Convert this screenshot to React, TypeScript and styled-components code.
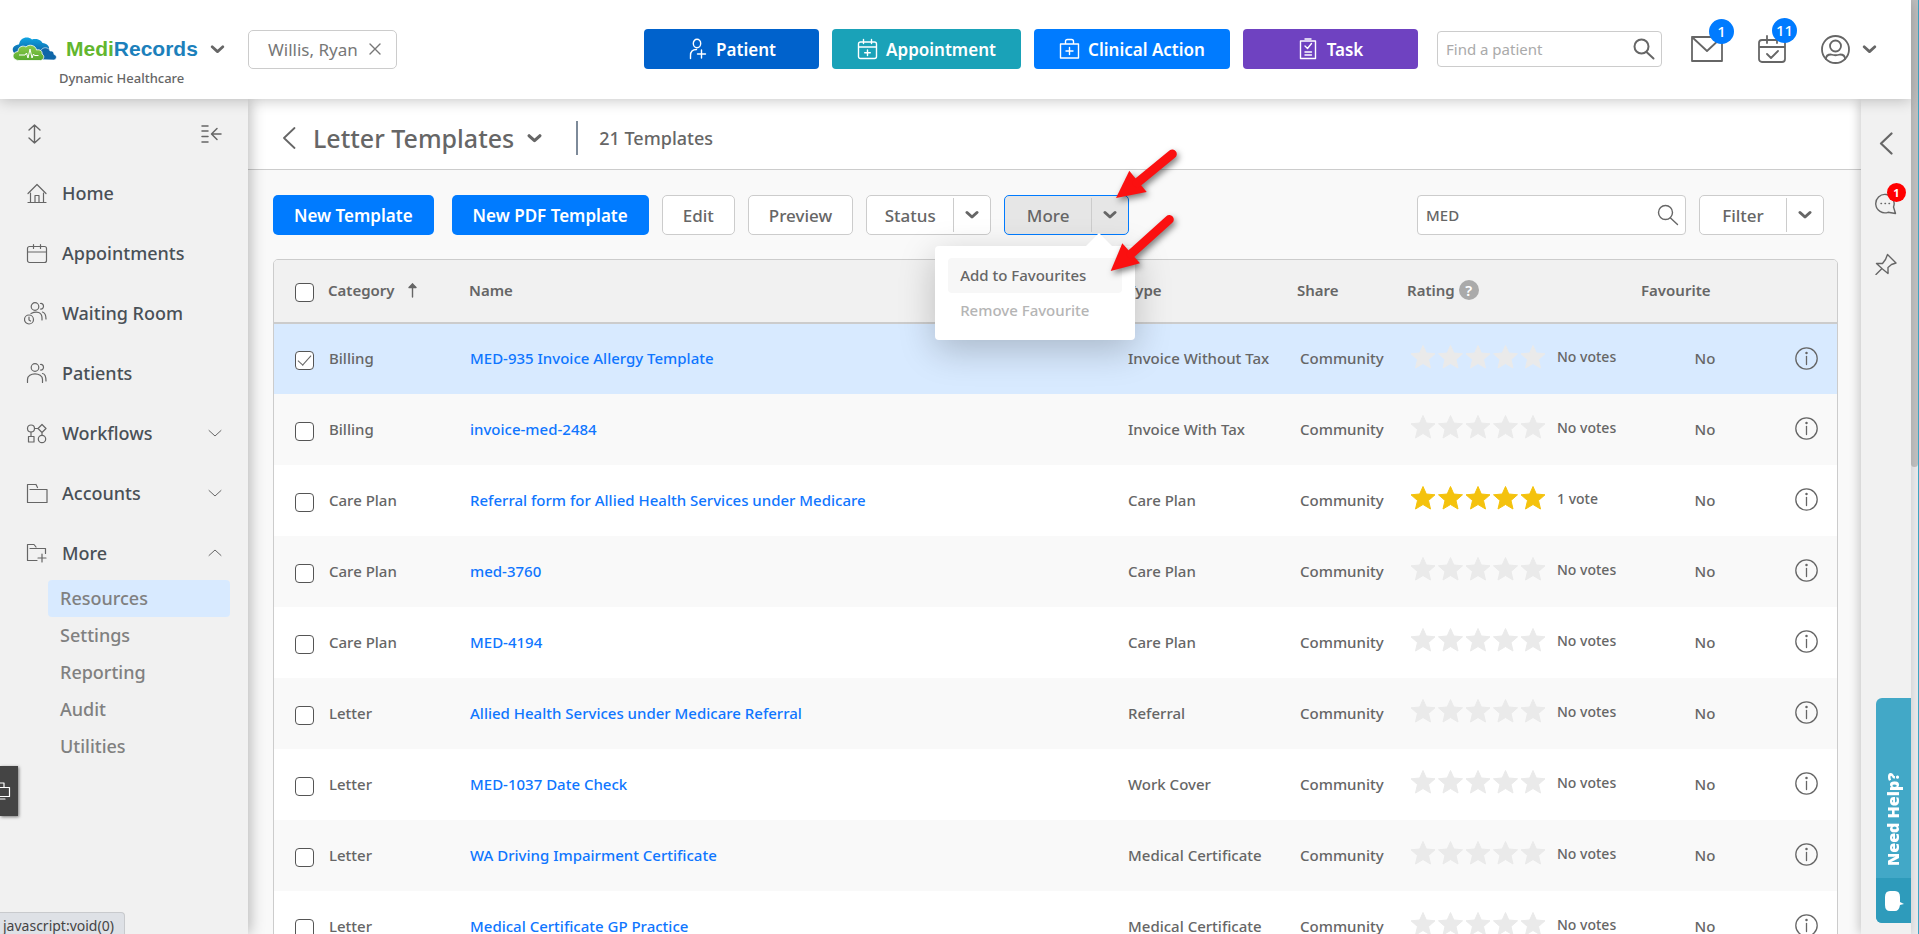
import React from "react";
import styled, { createGlobalStyle, css } from "styled-components";

const ink = "#666666";
const line = "#cccccc";
const blue = "#007bff";
const panel = "#f1f1f1";

const GlobalStyle = createGlobalStyle`
  *, *::before, *::after { box-sizing: border-box; }
  body {
    margin: 0;
    overflow: hidden;
    background: #f9f9f9;
    color: ${ink};
    font-family: "Noto Sans", "Open Sans", sans-serif;
    font-size: 15px;
    font-weight: 500;
  }
  button, input { font: inherit; color: inherit; }
  button { background: none; border: 0; padding: 0; cursor: pointer; }
  a { color: inherit; text-decoration: none; }
  svg { display: block; flex: none; }
`;

/* ---------- shared pieces ---------- */

const Svg = styled.svg<{ $w?: number }>`
  fill: none;
  stroke: currentColor;
  stroke-width: ${(p) => p.$w ?? 1.4};
  stroke-linecap: round;
  stroke-linejoin: round;
`;

type ChevronProps = { size?: number; weight?: number; up?: boolean };
const Chevron = ({ size = 14, weight = 3, up }: ChevronProps) => (
  <Svg width={size} height={size} viewBox="0 0 14 14" $w={weight}>
    <path d={up ? "M1 9.500 7 4l6 5.500" : weight < 2 ? "M1 4.500 7 10l6-5.500" : "M2 4.500 7 9l5-4.500"} />
  </Svg>
);

const SearchIcon = ({ weight = 1.4 }: { weight?: number }) => (
  <Svg width="22" height="22" viewBox="0 0 22 22" $w={weight}>
    <circle cx="8.500" cy="8.500" r="7" />
    <path d="M13.500 14 20.500 20.500" />
  </Svg>
);

/* ---------- window frame ---------- */

const Frame = styled.div`
  display: flex;
  height: 100vh;
  overflow: hidden;
`;

const Page = styled.div`
  display: flex;
  flex-direction: column;
  flex: 1;
  min-width: 0;
`;

const ScrollTrack = styled.div`
  width: 8px;
  background: #e9eaec;
  border-right: 1px solid #3fa6c5;
`;

const ScrollThumb = styled.div`
  height: 50%;
  background: #c0c0c0;
  border-radius: 0 0 4px 4px;
`;

/* ---------- header ---------- */

const Header = styled.header`
  position: relative;
  z-index: 3;
  display: flex;
  align-items: center;
  flex: none;
  height: 99px;
  padding: 0 34px 1px 0;
  background: #fff;
  box-shadow: 0 1px 14px rgba(0, 0, 0, 0.24);
`;

const Brand = styled.div`
  align-self: flex-start;
  width: 248px;
  padding: 34px 0 0 12px;
`;

const BrandRow = styled.div`
  display: flex;
  align-items: center;
  height: 30px;
`;

const BrandName = styled.span`
  margin: 0 12px 0 9px;
  font: bold 21px/30px "Liberation Sans", Arial, sans-serif;
  color: #1c80bb;
  b { color: #62b62f; }
`;

const Practice = styled.div`
  padding-left: 47px;
  font-size: 13px;
  line-height: 28px;
`;

const Chip = styled.div`
  display: flex;
  align-items: center;
  gap: 11px;
  height: 39px;
  padding: 0 15px 0 19px;
  border: 1px solid ${line};
  border-radius: 5px;
  color: #777;
  font-size: 17px;
  font-weight: 400;
`;

const Spacer = styled.div`
  flex: 1;
`;

const ActionGroup = styled.div`
  display: flex;
  gap: 13px;
  margin-right: 19px;
`;

const ActionButton = styled.button<{ $bg: string; $width: number }>`
  display: flex;
  align-items: center;
  justify-content: center;
  gap: 8px;
  width: ${(p) => p.$width}px;
  height: 40px;
  border-radius: 4px;
  background: ${(p) => p.$bg};
  color: #fff;
  font-size: 17px;
  font-weight: 600;
`;

const SearchBox = styled.label<{ $width: number; $height: number }>`
  display: flex;
  align-items: center;
  width: ${(p) => p.$width}px;
  height: ${(p) => p.$height}px;
  padding: 0 6px 0 8px;
  border: 1px solid ${line};
  border-radius: 4px;
  background: #fff;
  input {
    flex: 1;
    min-width: 0;
    padding: 0;
    border: 0;
    outline: 0;
    background: none;
    font-size: 15px;
  }
  input::placeholder { color: #aaa; font-weight: 400; }
`;

const HeaderIcons = styled.div`
  display: flex;
  align-items: center;
  gap: 35px;
  margin-left: 29px;
`;

const IconButton = styled.button`
  position: relative;
  display: flex;
  align-items: center;
  gap: 12px;
`;

const Badge = styled.span<{ $small?: boolean }>`
  position: absolute;
  top: ${(p) => (p.$small ? -10 : -17)}px;
  right: ${(p) => (p.$small ? -9 : -11)}px;
  width: ${(p) => (p.$small ? 19 : 25)}px;
  height: ${(p) => (p.$small ? 19 : 25)}px;
  border-radius: 50%;
  background: ${(p) => (p.$small ? "#ff0000" : blue)};
  color: #fff;
  font-size: ${(p) => (p.$small ? 11 : 15)}px;
  font-weight: ${(p) => (p.$small ? 700 : 500)};
  line-height: ${(p) => (p.$small ? 19 : 25)}px;
  text-align: center;
`;

/* ---------- sidebar ---------- */

const Body = styled.div`
  display: flex;
  flex: 1;
  min-height: 0;
`;

const Sidebar = styled.nav`
  position: relative;
  z-index: 1;
  flex: none;
  width: 248px;
  background: ${panel};
  box-shadow: 2px 0 14px rgba(0, 0, 0, 0.28);
`;

const SidebarTools = styled.div`
  display: flex;
  justify-content: space-between;
  align-items: center;
  height: 64px;
  padding: 6px 26px 0 27px;
`;

const NavItem = styled.a`
  display: flex;
  align-items: center;
  height: 60px;
  padding: 0 26px 0 24px;
  color: #495057;
  font-size: 18px;
  svg { color: ${ink}; }
  span { flex: 1; padding-left: 13px; }
`;

const SubNav = styled.div`
  display: flex;
  flex-direction: column;
  margin: -3px 18px 0 48px;
`;

const SubItem = styled.a<{ $active?: boolean }>`
  height: 37px;
  padding-left: 12px;
  border-radius: 4px;
  background: ${(p) => (p.$active ? "#d8eaff" : "none")};
  color: #808080;
  font-size: 18px;
  line-height: 37px;
`;

const SideTab = styled.button`
  position: absolute;
  left: 0;
  bottom: 118px;
  display: flex;
  align-items: center;
  width: 18px;
  height: 50px;
  background: #444;
  color: #fff;
  box-shadow: 1px 1px 3px rgba(0, 0, 0, 0.5);
`;

const LinkStatus = styled.div`
  position: absolute;
  left: 0;
  bottom: 0;
  height: 22px;
  padding: 0 10px 0 3px;
  border: solid #c8cacd;
  border-width: 1px 1px 0 0;
  border-radius: 0 4px 0 0;
  background: #dee1e6;
  color: #444;
  font-size: 14px;
  font-weight: 400;
  line-height: 26px;
`;

/* ---------- main ---------- */

const Main = styled.main`
  flex: 1;
  min-width: 0;
  overflow: hidden;
  background: #f9f9f9;
`;

const TitleBar = styled.div`
  display: flex;
  align-items: center;
  height: 71px;
  padding: 8px 34px 0;
  border-bottom: 1px solid ${line};
  background: #fff;
`;

const Title = styled.h1`
  margin: 0 13px 0 17px;
  font-size: 25px;
  font-weight: 500;
  line-height: 36px;
`;

const Count = styled.div`
  margin-left: 34px;
  padding-left: 21px;
  border-left: 2px solid #7d8a99;
  font-size: 18px;
  line-height: 34px;
`;

const Toolbar = styled.div`
  display: flex;
  align-items: center;
  gap: 13px;
  padding: 25px 37px 24px 25px;
`;

const buttonBase = css`
  height: 40px;
  border-radius: 5px;
  font-size: 17px;
`;

const PrimaryButton = styled.button<{ $spaced?: boolean }>`
  ${buttonBase}
  margin-right: ${(p) => (p.$spaced ? 5 : 0)}px;
  padding: 0 21px;
  background: ${blue};
  color: #fff;
  font-weight: 600;
`;

const PlainButton = styled.button`
  ${buttonBase}
  padding: 0 20px;
  border: 1px solid ${line};
  background: #fff;
`;

const SplitButton = styled.div<{ $open?: boolean }>`
  ${buttonBase}
  position: relative;
  display: flex;
  align-items: center;
  width: 125px;
  border: 1px solid ${(p) => (p.$open ? blue : line)};
  background: ${(p) => (p.$open ? "#e6e6e6" : "#fff")};
`;

const SplitLabel = styled.button`
  flex: 1;
  height: 34px;
`;

const SplitToggle = styled.button`
  display: flex;
  align-items: center;
  justify-content: center;
  width: 37px;
  height: 34px;
  border-left: 1px solid ${line};
`;

const Menu = styled.div`
  position: absolute;
  z-index: 2;
  top: 50px;
  left: -70px;
  width: 200px;
  padding: 12px 13px;
  border-radius: 4px;
  background: #fff;
  box-shadow: 0 10px 36px rgba(0, 0, 0, 0.22);
  &::before {
    content: "";
    position: absolute;
    top: -13px;
    left: 151px;
    border: 13px solid transparent;
    border-top: 0;
    border-bottom-color: #fff;
  }
`;

const MenuItem = styled.button`
  display: block;
  width: 100%;
  height: 35px;
  padding: 0 0 2px 12px;
  border-radius: 4px;
  text-align: left;
  font-size: 15px;
  background: ${(p) => (p.disabled ? "none" : "#f7f7f7")};
  color: ${(p) => (p.disabled ? "#b5b5b5" : ink)};
`;

const Pointers = styled.svg`
  position: absolute;
  z-index: 3;
  top: -56px;
  left: 95px;
  fill: #fb1010;
  stroke: #fb1010;
  pointer-events: none;
  filter: drop-shadow(2px 3px 3px rgba(0, 0, 0, 0.5));
`;

const TableFrame = styled.div`
  margin: 0 23px 0 25px;
  border: 1px solid ${line};
  border-radius: 5px 5px 0 0;
  overflow: hidden;
`;

const Table = styled.table`
  width: 100%;
  table-layout: fixed;
  border-collapse: collapse;
  font-size: 15px;
`;

const Col = styled.col<{ $w?: number }>`
  width: ${(p) => (p.$w ? `${p.$w}px` : "auto")};
`;

const Th = styled.th`
  height: 63px;
  padding: 0 0 2px;
  border-bottom: 2px solid ${line};
  background: ${panel};
  font-weight: 600;
  text-align: left;
`;

const Td = styled.td<{ $align?: string; $pad?: number }>`
  padding: 0 0 2px ${(p) => p.$pad ?? 0}px;
  text-align: ${(p) => p.$align ?? "left"};
  white-space: nowrap;
`;

const Row = styled.tr<{ $selected?: boolean }>`
  height: 71px;
  background: #fff;
  &:nth-child(even) { background: #f9f9f9; }
  ${(p) => p.$selected && css`background: #d8eaff;`}
`;

const HeadLabel = styled.span`
  display: flex;
  align-items: center;
  gap: 4px;
`;

const SortLabel = styled(HeadLabel)`
  gap: 12px;
`;

const Check = styled.input`
  appearance: none;
  display: block;
  width: 19px;
  height: 19px;
  margin: 5px 0 0 21px;
  border: 1px solid #555;
  border-radius: 4px;
  background: #fff;
  &:checked::before {
    content: "";
    display: block;
    width: 13px;
    height: 7px;
    margin: 3px 0 0 2px;
    border: solid #666;
    border-width: 0 0 1px 1px;
    transform: rotate(-48deg);
  }
`;

const HelpDot = styled.button`
  width: 20px;
  height: 20px;
  border-radius: 50%;
  background: #aaa;
  color: #fff;
  font-size: 15px;
  line-height: 20px;
`;

const NameLink = styled.a`
  color: #0f76ff;
`;

const Rating = styled.div`
  display: flex;
  align-items: center;
  padding-bottom: 3px;
  font-size: 14px;
  svg { margin-right: 10px; }
`;

const InfoButton = styled.button`
  display: block;
  margin-left: 26px;
`;

/* ---------- right rail ---------- */

const Rail = styled.aside`
  position: relative;
  z-index: 1;
  display: flex;
  flex-direction: column;
  align-items: center;
  flex: none;
  gap: 38px;
  width: 50px;
  padding-top: 33px;
  background: ${panel};
  box-shadow: -2px 0 10px rgba(0, 0, 0, 0.2);
`;

const HelpTab = styled.button`
  position: absolute;
  right: 0;
  bottom: 11px;
  display: flex;
  flex-direction: column;
  width: 35px;
  height: 225px;
  border-radius: 6px 0 0 6px;
  overflow: hidden;
  background: #42a8c7;
  color: #fff;
`;

const HelpText = styled.span`
  display: flex;
  align-items: center;
  flex: 1;
  width: 35px;
  padding-top: 12px;
  writing-mode: vertical-rl;
  transform: rotate(180deg);
  font-size: 16px;
  font-weight: 900;
  line-height: 35px;
`;

const HelpIcon = styled.span`
  display: flex;
  align-items: center;
  justify-content: center;
  width: 35px;
  height: 45px;
  background: #2e9bbb;
`;

/* ---------- drawings ---------- */

const Logo = () => (
  <svg width="45" height="24" viewBox="0 0 45 24">
    <defs>
      <linearGradient id="sky" x1="0" y1="0" x2="0" y2="1">
        <stop offset="0" stopColor="#10a4e2" />
        <stop offset="1" stopColor="#0d5a9c" />
      </linearGradient>
      <linearGradient id="leaf" x1="0" y1="0" x2="0" y2="1">
        <stop offset="0" stopColor="#8ccb4a" />
        <stop offset="1" stopColor="#57a92f" />
      </linearGradient>
    </defs>
    <path fill="url(#sky)" d="M4 17C0 16-.5 10 3.500 8.500 5 7.600 6 7.600 7 7.500 8 1 15-1.500 20 2.500c5-1.500 9.500 1 10.500 3.500 5 .5 7 3.500 6.500 6l-5 6z" />
    <path fill="#0f66a8" stroke="#fff" strokeWidth=".6" d="M24 22.500c-2-6 2-9.500 5-9 1.500-4 8-3.500 9 .5 3-.5 4 1.500 4 3.500 3 .5 3.500 5-.5 5.500z" />
    <path fill="url(#leaf)" stroke="#fff" strokeWidth=".8" d="M7 23.500c-8-.5-7.500-8.500-1-9C6 9.500 11 8 14 10c3-3.500 10-1.500 10.500 3 4-1 6 1.500 5.500 4 3 1.500 2 6-1.500 6.500z" />
    <path fill="none" stroke="#fff" strokeWidth="1" d="M7 18h6l1.500-2 1.500 5 2-9 2 9 1.500-4 1 1.500h4" />
  </svg>
);

const navIcons: Record<string, React.ReactNode> = {
  Home: <path d="M4 12.500 13 3.500l9 9M6.500 12v9.500M19.500 12v9.500M4 21.500h18M11 21.500v-7h4v7" />,
  Appointments: <path d="M5.500 5.500h15a2 2 0 0 1 2 2v12a2 2 0 0 1-2 2h-15a2 2 0 0 1-2-2v-12a2 2 0 0 1 2-2zM3.500 11h19M9.500 3.500v4M16.500 3.500v4" />,
  "Waiting Room": (
    <>
      <circle cx="11" cy="5.500" r="3.800" />
      <path d="M16.500 2.500c4-.5 4 6 0 5.500M7 12.500c6-3 11-1 11 4.500v2M18.500 11c3 1 3.500 3 3.500 7" />
      <circle cx="5" cy="18.500" r="4.500" />
      <path d="M5 16v3l1.500 1" />
    </>
  ),
  Patients: (
    <>
      <circle cx="11" cy="6.500" r="3.800" />
      <path d="M16.500 3.500c4-.5 4 6 0 5.500M3.500 21.500v-3c0-7.500 15-7.500 15 0v3M18.500 12.500c3 .5 3.500 3 3.500 7.500" />
    </>
  ),
  Workflows: (
    <>
      <circle cx="7" cy="7.500" r="3.500" />
      <circle cx="18" cy="18" r="3.700" />
      <path d="M4.500 15.500h5.500v5.500h-5.500zM7 11v4.500M10.500 7.500h3.500M18 11.500v2.500M18 3.500l4 4-4 4-4-4z" />
    </>
  ),
  Accounts: <path d="M12 3.500l1.500 3M6 8.500h17v13h-19.500v-18h8.500" />,
  More: <path d="M6 7.500h15.500v5M13 19.500h-9.500v-16h6.500l2 2.500M18 13v8M14 17h8" />,
};

const NavIcon = ({ name }: { name: string }) => (
  <Svg width="25" height="25" viewBox="0 0 25 25" $w={1.2}>{navIcons[name]}</Svg>
);

const actionIcons: Record<string, React.ReactNode> = {
  Patient: (
    <>
      <ellipse cx="10" cy="5.500" rx="3.700" ry="4.200" />
      <path d="M3.500 20.500v-3c0-4 2-6 6-6M14.500 12v8M10.500 16h8" />
    </>
  ),
  Appointment: <path d="M3.500 4h14a2 2 0 0 1 2 2v12.500a2 2 0 0 1-2 2h-14a2 2 0 0 1-2-2v-12.500a2 2 0 0 1 2-2zM1.500 9h18M6.500 1.500v4M14.500 1.500v4M10.500 12v5.500M7.700 14.700h5.600" />,
  "Clinical Action": <path d="M1.500 6h18v14h-18zM6.500 6v-2.500q0-2 2-2h4q2 0 2 2v2.500M10.500 9.500v7M7 13h7" />,
  Task: <path d="M2.500 3h15v17.500h-15zM7 1h6M7 8l2.500 2.500 4-5M7 14h6.500M7 17h6.500" />,
};

const starPath = "M0-12 3.300-4.500 12-3.700 5.500 2 7.500 10.500 0 6-7.500 10.500-5.500 2-12-3.700-3.300-4.500z";

const Stars = ({ filled }: { filled: boolean }) => {
  const color = filled ? "#f4c20d" : "#eaeaea";
  return (
    <svg width="136" height="24" viewBox="0 0 136 24" fill={color} stroke={color} strokeLinejoin="round">
      {[12, 39.5, 67, 94.5, 122].map((x) => (
        <path key={x} d={starPath} transform={`translate(${x} 12.500)`} />
      ))}
    </svg>
  );
};

/* ---------- data ---------- */

type Template = { category: string; name: string; type: string; votes: number };

const templates: Template[] = [
  { category: "Billing", name: "MED-935 Invoice Allergy Template", type: "Invoice Without Tax", votes: 0 },
  { category: "Billing", name: "invoice-med-2484", type: "Invoice With Tax", votes: 0 },
  { category: "Care Plan", name: "Referral form for Allied Health Services under Medicare", type: "Care Plan", votes: 1 },
  { category: "Care Plan", name: "med-3760", type: "Care Plan", votes: 0 },
  { category: "Care Plan", name: "MED-4194", type: "Care Plan", votes: 0 },
  { category: "Letter", name: "Allied Health Services under Medicare Referral", type: "Referral", votes: 0 },
  { category: "Letter", name: "MED-1037 Date Check", type: "Work Cover", votes: 0 },
  { category: "Letter", name: "WA Driving Impairment Certificate", type: "Medical Certificate", votes: 0 },
  { category: "Letter", name: "Medical Certificate GP Practice", type: "Medical Certificate", votes: 0 },
];

const actions = [
  { label: "Patient", bg: "#0062cc", width: 175 },
  { label: "Appointment", bg: "#1aa2b8", width: 189 },
  { label: "Clinical Action", bg: blue, width: 196 },
  { label: "Task", bg: "#6f42c1", width: 175 },
];

const navItems: { label: string; state?: "closed" | "open" }[] = [
  { label: "Home" },
  { label: "Appointments" },
  { label: "Waiting Room" },
  { label: "Patients" },
  { label: "Workflows", state: "closed" },
  { label: "Accounts", state: "closed" },
  { label: "More", state: "open" },
];

const subItems = ["Resources", "Settings", "Reporting", "Audit", "Utilities"];

/* ---------- sections ---------- */

const TopBar = () => (
  <Header>
    <Brand>
      <BrandRow>
        <Logo />
        <BrandName><b>Medi</b>Records</BrandName>
        <IconButton aria-label="Switch practice"><Chevron size={15} weight={2.6} /></IconButton>
      </BrandRow>
      <Practice>Dynamic Healthcare</Practice>
    </Brand>
    <Chip>
      Willis, Ryan
      <IconButton aria-label="Close patient">
        <Svg width="12" height="12" viewBox="0 0 12 12"><path d="M1 1l10 10M11 1 1 11" /></Svg>
      </IconButton>
    </Chip>
    <Spacer />
    <ActionGroup>
      {actions.map((a) => (
        <ActionButton key={a.label} $bg={a.bg} $width={a.width}>
          <Svg width="21" height="22" viewBox="0 0 21 22">{actionIcons[a.label]}</Svg>
          {a.label}
        </ActionButton>
      ))}
    </ActionGroup>
    <SearchBox $width={225} $height={36}>
      <input placeholder="Find a patient" aria-label="Find a patient" />
      <SearchIcon weight={2} />
    </SearchBox>
    <HeaderIcons>
      <IconButton aria-label="Messages">
        <Svg width="32" height="26" viewBox="0 0 32 26" $w={1.8}><path d="M1 1h30v24h-30zM1 1l15 14 15-14" /></Svg>
        <Badge>1</Badge>
      </IconButton>
      <IconButton aria-label="Tasks due">
        <Svg width="28" height="28" viewBox="0 0 28 28" $w={1.8}>
          <path d="M4 5h20a3 3 0 0 1 3 3v16a3 3 0 0 1-3 3h-20a3 3 0 0 1-3-3v-16a3 3 0 0 1 3-3zM1 12h26M9 1v7M19 1v7M9 19l4 4 7-7" />
        </Svg>
        <Badge>11</Badge>
      </IconButton>
      <IconButton aria-label="Account">
        <Svg width="29" height="29" viewBox="0 0 29 29" $w={1.8}>
          <circle cx="14.500" cy="14.500" r="13.500" />
          <circle cx="14.500" cy="11" r="5.500" />
          <path d="M5 24q0-4.500 5-4.500 4.500 1.500 9 0 5 0 5 4.500" />
        </Svg>
        <Chevron size={15} weight={2.6} />
      </IconButton>
    </HeaderIcons>
  </Header>
);

const SideNav = () => (
  <Sidebar>
    <SidebarTools>
      <IconButton aria-label="Expand all">
        <Svg width="15" height="20" viewBox="0 0 15 20"><path d="M7.500 1v18M2 6l5.500-5L13 6M2 14l5.500 5 5.500-5" /></Svg>
      </IconButton>
      <IconButton aria-label="Collapse sidebar">
        <Svg width="21" height="18" viewBox="0 0 21 18" $w={1.5}><path d="M1 1h6M1 6h6M1 11.500h6M1 17h6M20 9H11M16 3.500 10.500 9l5.500 5.500" /></Svg>
      </IconButton>
    </SidebarTools>
    {navItems.map((item) => (
      <NavItem key={item.label} href="#">
        <NavIcon name={item.label} />
        <span>{item.label}</span>
        {item.state && <Chevron size={14} weight={1} up={item.state === "open"} />}
      </NavItem>
    ))}
    <SubNav>
      {subItems.map((label, i) => (
        <SubItem key={label} href="#" $active={i === 0}>{label}</SubItem>
      ))}
    </SubNav>
    <SideTab aria-label="Devices">
      <Svg width="11" height="19" viewBox="0 0 11 19" $w={1.2}><path d="M0 1h4v4M0 5.500h9.500v9H0M0 17h5" /></Svg>
    </SideTab>
    <LinkStatus>javascript:void(0)</LinkStatus>
  </Sidebar>
);

const MoreMenu = () => (
  <SplitButton $open>
    <SplitLabel>More</SplitLabel>
    <SplitToggle aria-label="More options"><Chevron /></SplitToggle>
    <Menu>
      <MenuItem>Add to Favourites</MenuItem>
      <MenuItem disabled>Remove Favourite</MenuItem>
    </Menu>
    <Pointers width="90" height="140" viewBox="0 0 90 140">
      <path stroke="none" d="M16 58 29.300 30.700 46.700 52z" />
      <path strokeWidth="9" strokeLinecap="round" d="M72.300 14 37 43" />
      <path stroke="none" d="M10.700 131 22.300 103.300 40 123.300z" />
      <path strokeWidth="9" strokeLinecap="round" d="M69.300 79.500 31 114" />
    </Pointers>
  </SplitButton>
);

const TemplateTable = () => (
  <TableFrame>
    <Table>
      <colgroup>
        <Col $w={54} />
        <Col $w={141} />
        <Col />
        <Col $w={170} />
        <Col $w={110} />
        <Col $w={234} />
        <Col $w={128} />
        <Col $w={68} />
      </colgroup>
      <thead>
        <tr>
          <Th><Check type="checkbox" aria-label="Select all" /></Th>
          <Th>
            <SortLabel>
              Category
              <Svg width="11" height="15" viewBox="0 0 11 15"><path d="M5.500 14V1" /><path fill="currentColor" d="M5.500 1 2 4.500h7z" /></Svg>
            </SortLabel>
          </Th>
          <Th>Name</Th>
          <Th>Type</Th>
          <Th>Share</Th>
          <Th><HeadLabel>Rating<HelpDot aria-label="About ratings">?</HelpDot></HeadLabel></Th>
          <Th>Favourite</Th>
          <Th />
        </tr>
      </thead>
      <tbody>
        {templates.map((t, i) => (
          <Row key={t.name} $selected={i === 0}>
            <Td><Check type="checkbox" defaultChecked={i === 0} aria-label={`Select ${t.name}`} /></Td>
            <Td $pad={1}>{t.category}</Td>
            <Td $pad={1}><NameLink href="#">{t.name}</NameLink></Td>
            <Td $pad={1}>{t.type}</Td>
            <Td $pad={3}>Community</Td>
            <Td $pad={4}>
              <Rating>
                <Stars filled={t.votes > 0} />
                {t.votes > 0 ? `${t.votes} vote` : "No votes"}
              </Rating>
            </Td>
            <Td $align="center">No</Td>
            <Td>
              <InfoButton aria-label="Details">
                <Svg width="23" height="23" viewBox="0 0 23 23" $w={1.3}>
                  <circle cx="11.500" cy="11.500" r="10.700" />
                  <path d="M11.500 9.500v8" />
                  <circle cx="11.500" cy="6" r=".6" fill="currentColor" />
                </Svg>
              </InfoButton>
            </Td>
          </Row>
        ))}
      </tbody>
    </Table>
  </TableFrame>
);

const Content = () => (
  <Main>
    <TitleBar>
      <IconButton aria-label="Back">
        <Svg width="14" height="22" viewBox="0 0 14 22" $w={1.8}><path d="M12.500 1 2 11l10.500 10" /></Svg>
      </IconButton>
      <Title>Letter Templates</Title>
      <IconButton aria-label="Choose section"><Chevron size={15} /></IconButton>
      <Count>21 Templates</Count>
    </TitleBar>
    <Toolbar>
      <PrimaryButton $spaced>New Template</PrimaryButton>
      <PrimaryButton>New PDF Template</PrimaryButton>
      <PlainButton>Edit</PlainButton>
      <PlainButton>Preview</PlainButton>
      <SplitButton>
        <SplitLabel>Status</SplitLabel>
        <SplitToggle aria-label="Status options"><Chevron /></SplitToggle>
      </SplitButton>
      <MoreMenu />
      <Spacer />
      <SearchBox $width={269} $height={40}>
        <input defaultValue="MED" aria-label="Search templates" />
        <SearchIcon />
      </SearchBox>
      <SplitButton>
        <SplitLabel>Filter</SplitLabel>
        <SplitToggle aria-label="Filter options"><Chevron /></SplitToggle>
      </SplitButton>
    </Toolbar>
    <TemplateTable />
  </Main>
);

const RightRail = () => (
  <Rail>
    <IconButton aria-label="Open panel">
      <Svg width="14" height="23" viewBox="0 0 14 23" $w={2.200}><path d="M12.500 1.500 2 11.500l10.500 10" /></Svg>
    </IconButton>
    <IconButton aria-label="Chat">
      <Svg width="22" height="22" viewBox="0 0 22 22">
        <path d="M20.500 20.500 13 19.300A9.200 9.200 0 1 1 18.500 14zM6 10.500h.5M10 10.500h.5M14 10.500h.5" />
      </Svg>
      <Badge $small>1</Badge>
    </IconButton>
    <IconButton aria-label="Pin">
      <Svg width="22" height="22" viewBox="0 0 22 22">
        <path d="M12.500 1.500 21 10l-4.500 1.500-3.500 3v6L7.500 16 1.500 10.500h6l3-4zM7 15.500l-6 6" />
      </Svg>
    </IconButton>
    <HelpTab>
      <HelpText>Need Help?</HelpText>
      <HelpIcon>
        <svg width="20" height="22" viewBox="0 0 20 22" fill="#fff">
          <path d="M6 1h5q5 0 5 6v5l4 2-4 1q-1 6-5 6H6q-5 0-5-6V7q0-6 5-6z" />
        </svg>
      </HelpIcon>
    </HelpTab>
  </Rail>
);

export default function App() {
  return (
    <Frame>
      <GlobalStyle />
      <Page>
        <TopBar />
        <Body>
          <SideNav />
          <Content />
          <RightRail />
        </Body>
      </Page>
      <ScrollTrack><ScrollThumb /></ScrollTrack>
    </Frame>
  );
}
